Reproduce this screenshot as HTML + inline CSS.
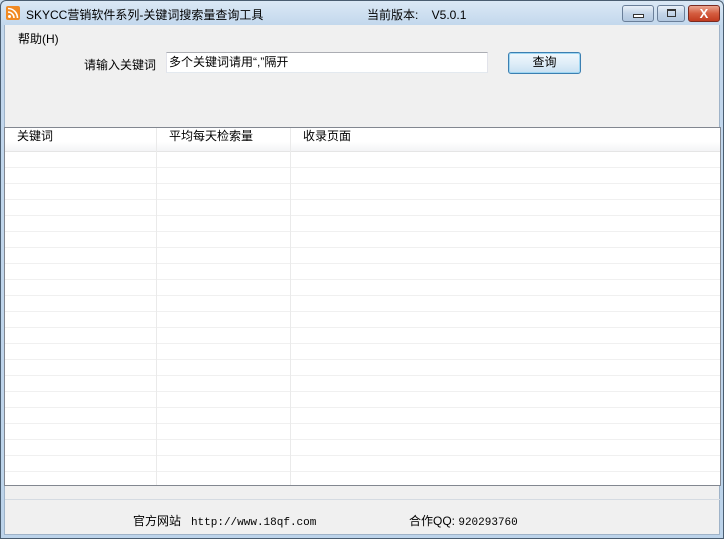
<!DOCTYPE html>
<html><head><meta charset="utf-8"><style>
*{margin:0;padding:0;box-sizing:border-box}
body{width:724px;height:539px;position:relative;overflow:hidden;font-family:"Liberation Sans","Noto Sans CJK SC",sans-serif;font-size:12px;color:#000;background:#c9dcee}
.frame{position:absolute;left:0;top:0;width:724px;height:539px;border:1px solid #4a5d70;border-radius:6px 6px 0 0;background:linear-gradient(#dbe8f5,#c2d7ec 25px,#bcd3ea)}
.client{position:absolute;left:4px;top:25px;width:716px;height:510px;background:#f0f0f0;border-left:1px solid #9fb3c8;border-right:1px solid #9fb3c8;border-bottom:1px solid #9fb3c8}
.abs{position:absolute;white-space:nowrap}
.btn{position:absolute;top:5px;height:17px;border:1px solid #6a7f99;border-radius:3px;background:linear-gradient(#e9f0f8,#c4d5e8 50%,#b2c7df)}
.table{position:absolute;left:4px;top:127px;width:717px;height:359px;border:1px solid #828790;background:#fff}
.rows{position:absolute;left:0;top:24px;right:0;bottom:0;background:repeating-linear-gradient(#fff 0 15px,#f0f0f0 15px 16px)}
.vl{position:absolute;top:0;bottom:0;width:1px;background:#eaeaea}
</style></head><body>
<div class="frame"></div>
<div class="abs" style="left:6px;top:6px;width:14px;height:14px;background:#f08a24;border-radius:2px">
<svg width="14" height="14"><circle cx="3.5" cy="10.5" r="1.5" fill="#fff"/><path d="M2 6a6 6 0 0 1 6 6M2 2.5a9.5 9.5 0 0 1 9.5 9.5" stroke="#fff" stroke-width="1.6" fill="none"/></svg></div>
<div class="abs" style="left:26px;top:6px;font-size:12px;color:#000">SKYCC营销软件系列-关键词搜索量查询工具</div>
<div class="abs" style="left:367px;top:6px">当前版本:&nbsp;&nbsp;&nbsp;&nbsp;V5.0.1</div>
<div class="btn" style="left:622px;width:32px"><div style="position:absolute;left:10px;top:8px;width:11px;height:4px;border:1px solid #333;background:#fff"></div></div>
<div class="btn" style="left:657px;width:28px"><div style="position:absolute;left:9px;top:3px;width:9px;height:8px;border:1px solid #333;border-top-width:2px"></div></div>
<div class="btn" style="left:688px;width:32px;border-color:#7a2a20;background:linear-gradient(#eaa58f,#d45c3f 50%,#c23c20);color:#fff;font-weight:bold;font-size:13px;text-align:center;line-height:15px">X</div>
<div class="client">
<div class="abs" style="left:13px;top:5px">帮助(H)</div>
<div class="abs" style="left:79px;top:31px">请输入关键词</div>
<div class="abs" style="left:161px;top:27px;width:322px;height:21px;background:#fff;border:1px solid #abadb3;border-color:#abadb3 #e2e3ea #e3e9ef #e2e3ea;padding:1px 2px;line-height:16px">多个关键词请用“,”隔开</div>
<div class="abs" style="left:503px;top:27px;width:73px;height:22px;border:1px solid #3c7fb1;border-radius:3px;background:linear-gradient(#f0f8fd,#e0eef8 50%,#c8e0f2);box-shadow:inset 0 0 0 1px #9ed6f2;text-align:center;line-height:19px">查询</div>
</div>
<div class="table">
<div class="abs" style="left:0;top:0;width:100%;height:24px;border-bottom:1px solid #e5e5e5;background:linear-gradient(#fff,#fff 60%,#f3f4f6)"></div>
<div class="rows"></div>
<div class="vl" style="left:151px"></div>
<div class="vl" style="left:285px"></div>
<div class="abs" style="left:12px;top:1px;line-height:14px">关键词</div>
<div class="abs" style="left:164px;top:1px;line-height:14px">平均每天检索量</div>
<div class="abs" style="left:298px;top:1px;line-height:14px">收录页面</div>
</div>
<div class="abs" style="left:5px;top:499px;width:715px;height:1px;background:#d5dbe2"></div>
<div class="abs" style="left:133px;top:512px">官方网站 <span style="font-family:'Liberation Mono',monospace;font-size:11px">&nbsp;http://www.18qf.com</span></div>
<div class="abs" style="left:409px;top:512px">合作QQ: <span style="font-family:'Liberation Mono',monospace;font-size:11px">920293760</span></div>
</body></html>
